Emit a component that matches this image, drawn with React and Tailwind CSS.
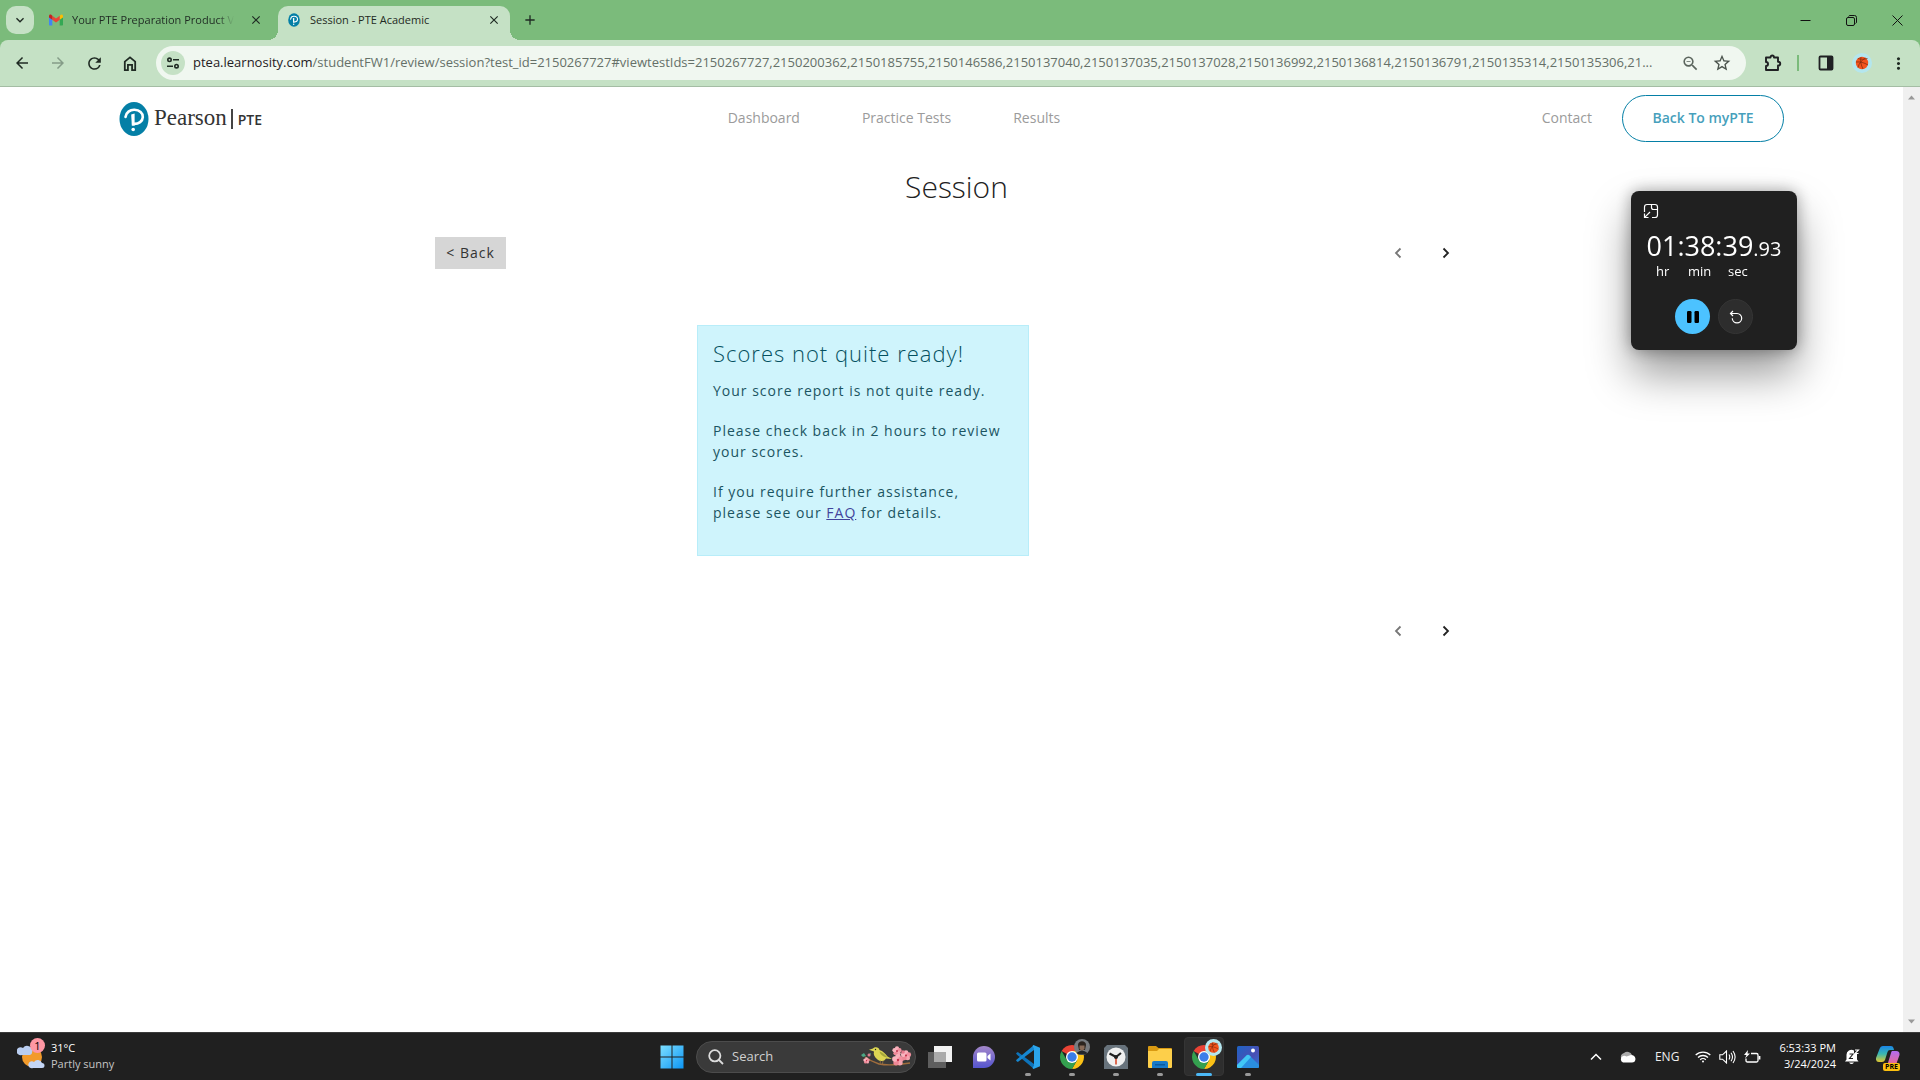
import React from "react";
import {
  MdArrowBack,
  MdArrowForward,
  MdRefresh,
  MdZoomOut,
  MdStarBorder,
  MdClose,
  MdAdd,
  MdKeyboardArrowDown,
  MdMoreVert,
} from "react-icons/md";

function PearsonMark({ className }) {
  return (
    <svg viewBox="0 0 30 34" className={className} aria-hidden="true">
      <ellipse cx="15" cy="17" rx="14.500" ry="17" fill="#047fa6" />
      <path d="M6.500 15C7 10.500 11 7.600 15.500 7.800c5 .2 8.500 3.200 8.300 7.300-.2 4.200-4 6.900-8.800 6.800" fill="none" stroke="#fff" strokeWidth="2.600" strokeLinecap="round" />
      <path d="M12.200 12.500l3.400-1v12.300h-2.800z" fill="#fff" />
      <circle cx="14.200" cy="27.500" r="1.800" fill="#fff" />
    </svg>
  );
}

function GmailIcon() {
  return (
    <svg viewBox="0 0 16 16" className="size-4 shrink-0" aria-hidden="true">
      <path d="M1 4v8.500c0 .6.400 1 1 1h2.300V7.500z" fill="#4285f4" />
      <path d="M15 4v8.500c0 .6-.4 1-1 1h-2.300V7.500z" fill="#34a853" />
      <path d="M11.700 3.800v4L15 5.400V4c0-1.500-1.500-2-2.500-1z" fill="#fbbc04" />
      <path d="M4.300 7.800v-4L8 6.600l3.700-2.800v4L8 10.600z" fill="#ea4335" />
      <path d="M1 4v1.400l3.300 2.400v-4L3.500 3C2.500 2 1 2.600 1 4z" fill="#c5221f" />
    </svg>
  );
}

function TuneIcon() {
  return (
    <svg viewBox="0 0 14 14" className="size-3.5" fill="none" stroke="#1f2a23" strokeWidth="1.600" aria-hidden="true">
      <circle cx="3.500" cy="3.800" r="1.700" />
      <path d="M7 3.800h6M1 10.200h6" />
      <circle cx="10.500" cy="10.200" r="1.700" />
    </svg>
  );
}

function SidePanelIcon() {
  return (
    <svg viewBox="0 0 16 16" className="size-4" aria-hidden="true">
      <rect x="1.500" y="1.500" width="13" height="13" rx="1" fill="none" stroke="#1f2023" strokeWidth="1.800" />
      <path d="M9 1.500h5.500v13H9z" fill="#1f2023" />
    </svg>
  );
}

function Basketball({ className }) {
  return (
    <svg viewBox="0 0 20 20" className={className} aria-hidden="true">
      <circle cx="10" cy="10" r="10" fill="#b4e6ee" />
      <circle cx="10" cy="10" r="6.200" fill="#f4541d" />
      <path d="M4 9c4-.5 8 .5 12 3M9 4c-1 4 0 8 2 12M13.500 5C10 7 7 10 6 14.500M6 5.500c3 1 6 1 9.500 0" fill="none" stroke="#7a2a10" strokeWidth=".7" />
    </svg>
  );
}

function ChromeLogo() {
  return (
    <svg viewBox="0 0 24 24" className="size-6" aria-hidden="true">
      <path d="M12 12L1.610 6A12 12 0 0 1 22.390 6z" fill="#ea4335" />
      <path d="M22.390 6A12 12 0 0 1 12 24L17.200 15 12 6z" fill="#fbc116" />
      <path d="M1.610 6A12 12 0 0 0 12 24l5.200-9L12 12l-5.200 3z" fill="#34a04f" />
      <circle cx="12" cy="12" r="6" fill="#fff" />
      <circle cx="12" cy="12" r="4.700" fill="#3b7de9" />
    </svg>
  );
}

function CaptionButton({ label, children }) {
  return (
    <button type="button" aria-label={label} className="grid h-10 w-[46px] place-items-center">
      <svg viewBox="0 0 11 11" className="size-[11px]" fill="none" stroke="#111" strokeWidth="1" aria-hidden="true">
        {children}
      </svg>
    </button>
  );
}

function TabStrip() {
  return (
    <div className="flex h-10 bg-[#7bbb7b] text-[11px] text-[#1f2a23]">
      <button type="button" aria-label="Search tabs" className="mt-1.5 ml-1.5 grid size-7 place-items-center rounded-[10px] bg-[#c5e1c5]">
        <MdKeyboardArrowDown className="size-4" />
      </button>
      <div className="ml-2 flex w-[236px] items-center pr-[15px] pl-1.5">
        <GmailIcon />
        <span className="ml-2 whitespace-nowrap [mask-image:linear-gradient(to_right,black_90%,transparent)]">
          Your PTE Preparation Product V
        </span>
        <button type="button" aria-label="Close tab" className="ml-auto">
          <MdClose className="size-3.5" />
        </button>
      </div>
      <div className="relative mt-1.5 flex w-[232px] items-center rounded-t-[10px] bg-[#c5e1c5] pr-[9px] pb-1.5 pl-2">
        <span className="absolute bottom-0 -left-2.5 size-2.5 bg-[radial-gradient(circle_at_0_0,#7bbb7b_10px,#c5e1c5_10px)]" />
        <span className="absolute -right-2.5 bottom-0 size-2.5 bg-[radial-gradient(circle_at_100%_0,#7bbb7b_10px,#c5e1c5_10px)]" />
        <span className="grid size-4 place-items-center">
          <PearsonMark className="h-3.5 w-3" />
        </span>
        <span className="ml-2 whitespace-nowrap">Session - PTE Academic</span>
        <button type="button" aria-label="Close tab" className="ml-auto">
          <MdClose className="size-3.5" />
        </button>
      </div>
      <button type="button" aria-label="New tab" className="ml-2.5 grid h-10 w-5 place-items-center">
        <MdAdd className="size-4" />
      </button>
      <div className="ml-auto flex">
        <CaptionButton label="Minimize">
          <path d="M.5 5.500h10" />
        </CaptionButton>
        <CaptionButton label="Restore">
          <rect x=".5" y="2.500" width="8" height="8" rx="1.500" />
          <path d="M2.500 1.500Q3 .5 4 .5h4.500q2 0 2 2V7q0 1-1 1.500" />
        </CaptionButton>
        <CaptionButton label="Close">
          <path d="M.5.500l10 10M10.500.500l-10 10" />
        </CaptionButton>
      </div>
    </div>
  );
}

const url =
  "/studentFW1/review/session?test_id=2150267727#viewtestIds=2150267727,2150200362,2150185755,2150146586,2150137040,2150137035,2150137028,2150136992,2150136814,2150136791,2150135314,2150135306,21...";

function Toolbar() {
  return (
    <div className="bg-[#7bbb7b]">
      <div className="flex h-[47px] items-center rounded-t-lg border-b border-[#a4bda4] bg-[#c5e1c5] pl-1 text-[#1f2a23]">
        <button type="button" aria-label="Back" className="grid w-9 place-items-center"><MdArrowBack className="size-[18px]" /></button>
        <button type="button" aria-label="Forward" disabled className="grid w-9 place-items-center text-[#859c88]"><MdArrowForward className="size-[18px]" /></button>
        <button type="button" aria-label="Reload" className="grid w-9 place-items-center"><MdRefresh className="size-[19px]" /></button>
        <button type="button" aria-label="Home" className="grid w-9 place-items-center">
          <svg viewBox="0 0 16 18" className="h-[17px] w-4" fill="none" stroke="currentColor" strokeWidth="1.900" aria-hidden="true">
            <path d="M2.500 7L8 2.500 13.500 7v9h-3.300v-5.500H5.800V16H2.500z" />
          </svg>
        </button>
        <div className="ml-2 flex h-[34px] min-w-0 flex-1 items-center rounded-full bg-[#f0f7f0] pr-3 pl-[5px]">
          <button type="button" aria-label="Site information" className="grid size-6 shrink-0 place-items-center rounded-full bg-[#c5e1c5]">
            <TuneIcon />
          </button>
          <span className="ml-2 min-w-0 flex-1 truncate text-[13px] text-[#657068]">
            <span className="text-[#1f2023]">ptea.learnosity.com</span>
            {url}
          </span>
          <button type="button" aria-label="Zoom" className="ml-1 grid size-6 shrink-0 place-items-center text-[#5b655d]"><MdZoomOut className="size-[19px]" /></button>
          <button type="button" aria-label="Bookmark this tab" className="ml-2 grid size-6 shrink-0 place-items-center text-[#4a534c]"><MdStarBorder className="size-5" /></button>
        </div>
        <button type="button" aria-label="Extensions" className="ml-[15px] grid w-6 place-items-center">
          <svg viewBox="0 0 18 18" className="size-[18px]" fill="none" stroke="#1f2023" strokeWidth="1.900" strokeLinejoin="round" aria-hidden="true">
            <path d="M2 3.500h4.500C6.500.8 10 .8 10 3.500h4v4.300c3 0 3 3.700 0 3.700V16H2v-4c2.700 0 2.700-4 0-4z" />
          </svg>
        </button>
        <span className="mr-[11px] ml-3 h-4 w-0.5 bg-[#7bbb7b]" />
        <button type="button" aria-label="Side panel" className="grid w-8 place-items-center"><SidePanelIcon /></button>
        <button type="button" aria-label="Profile" className="ml-0.5 grid w-9 place-items-center"><Basketball className="size-5" /></button>
        <button type="button" aria-label="Menu" className="mr-1 grid w-9 place-items-center"><MdMoreVert className="size-[19px]" /></button>
      </div>
    </div>
  );
}

function SiteHeader() {
  return (
    <header className="flex items-center justify-between px-[6.25%] pt-2 text-[14px] text-[#9b9b9b]">
      <a href="#home" className="flex h-[47px] items-center text-[#333]" aria-label="Pearson PTE">
        <PearsonMark className="h-[34px] w-[30px]" />
        <span className="ml-[5px] font-['Liberation_Serif',serif] text-[23px]">Pearson</span>
        <span className="ml-1 h-5 w-0.5 bg-[#444]" />
        <span className="ml-[5px] pt-0.5 text-[14px] font-semibold">PTE</span>
      </a>
      <nav className="flex gap-[62px] pr-4 pb-0.5 font-medium">
        <a href="#dashboard">Dashboard</a>
        <a href="#tests">Practice Tests</a>
        <a href="#results">Results</a>
      </nav>
      <div className="flex items-center gap-[30px]">
        <a href="#contact" className="pb-0.5 font-medium">Contact</a>
        <a href="#mypte" className="grid h-[47px] w-[162px] place-items-center rounded-full border border-[#047fa6] pb-0.5 font-semibold text-[#479fbc]">
          Back To myPTE
        </a>
      </div>
    </header>
  );
}

function Pager() {
  return (
    <div className="flex">
      <button type="button" aria-label="Previous" disabled className="grid h-8 w-12 place-items-center text-[#777]">
        <svg viewBox="0 0 8 12" className="h-3 w-2" fill="none" stroke="currentColor" strokeWidth="1.800" aria-hidden="true"><path d="M6.500 1.500L2 6l4.500 4.500" /></svg>
      </button>
      <button type="button" aria-label="Next" className="grid h-8 w-12 place-items-center text-[#222]">
        <svg viewBox="0 0 8 12" className="h-3 w-2" fill="none" stroke="currentColor" strokeWidth="1.800" aria-hidden="true"><path d="M1.500 1.500L6 6l-4.500 4.500" /></svg>
      </button>
    </div>
  );
}

function SessionPage() {
  return (
    <main className="mx-auto w-full max-w-[1037px] pt-[25px] pl-0.5">
      <h1 className="pl-2 text-center text-[30px] leading-10 font-light text-[#222]">Session</h1>
      <div className="mt-[30px] flex items-center justify-between">
        <button type="button" className="h-8 w-[71px] bg-[#d6d6d6] pb-0.5 text-[14px] tracking-[1px] text-[#333]">&lt; Back</button>
        <Pager />
      </div>
      <section className="mt-14 ml-[262px] w-[332px] border border-[#b8edf9] bg-[#cff4fc] pt-[11px] pr-5 pb-[13px] pl-[15px] text-[14px] leading-[21px] tracking-[1px] text-[#1b5562]">
        <h2 className="text-[22px] leading-8 font-light text-[#055160]">Scores not quite ready!</h2>
        <p className="mt-[11px] mb-[19px]">Your score report is not quite ready.</p>
        <p className="mb-[19px]">Please check back in 2 hours to review your scores.</p>
        <p className="mb-[19px]">
          If you require further assistance, please see our{" "}
          <a href="#faq" className="text-[#42439b] underline">FAQ</a> for details.
        </p>
      </section>
      <div className="mt-[59px] flex justify-end">
        <Pager />
      </div>
    </main>
  );
}

function Stopwatch() {
  return (
    <aside className="fixed top-[191px] right-[123px] h-[159px] w-[166px] rounded-lg bg-[#202020] text-white shadow-[0_24px_44px_rgba(0,0,0,0.4),0_0_16px_rgba(0,0,0,0.35)]">
      <button type="button" aria-label="Back to full view" className="mt-3 ml-3 block">
        <svg viewBox="0 0 16 16" className="size-4" fill="none" stroke="#fff" strokeWidth="1.200" aria-hidden="true">
          <path d="M1.500 9V4q0-2.500 2.500-2.500h8q2.500 0 2.500 2.500v8q0 2.500-2.500 2.500H9M8.500 1.500v3q0 2 2 2h4M7 9l-5.300 5.300M1.500 10.500v4h4" />
        </svg>
      </button>
      <div className="mt-3 flex h-8 items-baseline justify-center leading-[30px]">
        <span className="text-[27px]">01:38:39</span>
        <span className="text-[20px]">.93</span>
      </div>
      <div className="flex h-4 gap-4 pl-[25px] text-[13px] leading-4">
        <span className="w-4">hr</span>
        <span className="w-6">min</span>
        <span>sec</span>
      </div>
      <div className="mt-5 flex justify-center gap-2">
        <button type="button" aria-label="Pause" className="grid size-[35px] place-items-center rounded-full bg-[#4cc2ff]">
          <svg viewBox="0 0 12 12" className="size-3" aria-hidden="true"><rect width="4.500" height="12" rx="1.200" fill="#000" /><rect x="7.500" width="4.500" height="12" rx="1.200" fill="#000" /></svg>
        </button>
        <button type="button" aria-label="Reset" className="grid size-[35px] place-items-center rounded-full border border-[#353535] bg-[#2d2d2d]">
          <svg viewBox="0 0 14 14" className="size-3.5" fill="none" stroke="#fff" strokeWidth="1.200" aria-hidden="true">
            <path d="M4 1L1.500 3.500 4 6M1.500 3.500H8a4.700 4.700 0 1 1-4.700 4.700" />
          </svg>
        </button>
      </div>
    </aside>
  );
}

function TaskIcon({ label, state, badge, children }) {
  return (
    <button type="button" aria-label={label} className="relative grid h-[47px] w-11 place-items-center">
      {state === "active" && <span className="absolute inset-x-0.5 inset-y-1 rounded border border-[#353535] bg-[#2e2e2e]" />}
      <span className="relative">{children}</span>
      {badge}
      {state === "open" && <span className="absolute bottom-1 left-1/2 h-[3px] w-1.5 -translate-x-1/2 rounded-full bg-[#999]" />}
      {state === "active" && <span className="absolute bottom-1 left-1/2 h-[3px] w-4 -translate-x-1/2 rounded-full bg-[#4cb8f5]" />}
    </button>
  );
}

function Blossom({ x, y, r }) {
  return (
    <g transform={`translate(${x} ${y}) scale(${r})`}>
      <circle cx="0" cy="-.6" r=".5" fill="#f9b0bb" />
      <circle cx=".57" cy="-.18" r=".5" fill="#f2909f" />
      <circle cx=".35" cy=".5" r=".5" fill="#f7a5b1" />
      <circle cx="-.35" cy=".5" r=".5" fill="#ee8796" />
      <circle cx="-.57" cy="-.18" r=".5" fill="#f9b4be" />
      <circle r=".22" fill="#c8324e" />
    </g>
  );
}

function BirdDecoration() {
  return (
    <svg viewBox="0 0 52 22" className="h-[22px] w-[52px]" aria-hidden="true">
      <path d="M5 11c4 3 8 5 14 7 8 1.500 18 1 31-1" fill="none" stroke="#a06d3c" strokeWidth="1.400" />
      <path d="M1 9l3-2 2 3-3 1zM8 8l3-1-1 3z" fill="#4aa884" />
      <Blossom x={6.500} y={14.500} r={3} />
      <circle cx="9" cy="9" r="1.500" fill="#e07a8d" />
      <path d="M9 3.800l4-1.300C14.500.5 19 .5 19.500 4c3.500 1 6 4 8 6.500l4.500 2.500-6-.5c-1.500 3-5.500 3.500-8.500 1-2.800-2.300-4.500-5-3.500-8z" fill="#dcd653" />
      <path d="M19.500 5.500c3.500 1 6 3.500 8 6-3.500-.5-7-2-8-6z" fill="#a5a83a" />
      <circle cx="15.500" cy="3.500" r=".7" fill="#222" />
      <path d="M20.500 14.500l-.5 3.500M23 14.500l-.5 3.500" stroke="#9b7545" strokeWidth=".8" />
      <Blossom x={37} y={5} r={4.300} />
      <Blossom x={38} y={14} r={5.500} />
      <Blossom x={46} y={9.500} r={4.800} />
      <circle cx="43" cy="6" r="1.800" fill="#e77a8d" />
    </svg>
  );
}

function Apps() {
  return (
    <>
      <TaskIcon label="Task view">
        <svg viewBox="0 0 24 22" className="h-[22px] w-6" aria-hidden="true">
          <path d="M6 0h18v16H6z" fill="#f2f2f2" /><path d="M0 6h18v16H0z" fill="#6a6a6a" fillOpacity=".85" /><path d="M6 6h12v10H6z" fill="#aaa" />
        </svg>
      </TaskIcon>
      <TaskIcon label="Chat">
        <svg viewBox="0 0 24 24" className="size-6" aria-hidden="true">
          <defs><linearGradient id="chat" x1="0" y1="0" x2="0" y2="1"><stop stopColor="#a487c9" /><stop offset="1" stopColor="#5454cf" /></linearGradient></defs>
          <path d="M12 1a11 11 0 1 1 0 22H1V12A11 11 0 0 1 12 1z" fill="url(#chat)" />
          <rect x="5" y="7.500" width="9.500" height="9" rx="1.500" fill="#fff" /><path d="M15.500 11l3-2.500v7l-3-2.500z" fill="#fff" />
        </svg>
      </TaskIcon>
      <TaskIcon label="Visual Studio Code" state="open">
        <svg viewBox="0 0 24 24" className="size-6" aria-hidden="true">
          <path d="M0 8.300L1.800 7 18 19v5L1 9.800z" fill="#0d73ba" />
          <path d="M0 15.700L1.800 17 18 5V0L1 14.200z" fill="#1688d2" />
          <path d="M17.500 0L24 2.800v18.400L17.500 24l-1-1L18 20.500v-17L16.500 1z" fill="#2ba5ec" />
        </svg>
      </TaskIcon>
      <TaskIcon
        label="Google Chrome"
        state="open"
        badge={
          <svg viewBox="0 0 16 16" className="absolute top-1.5 right-1 size-4" aria-hidden="true">
            <circle cx="8" cy="8" r="8" fill="#777b80" /><path d="M4 6c0-5 8-5 8 0l-1 5H5z" fill="#2c241f" /><path d="M5.500 6.500h5V10L8 12l-2.500-2z" fill="#896b58" /><path d="M2.500 14q5.500-5 11 0l-2 1.500h-7z" fill="#22252a" />
          </svg>
        }
      >
        <ChromeLogo />
      </TaskIcon>
      <TaskIcon label="Clock" state="open">
        <svg viewBox="0 0 24 24" className="size-6" aria-hidden="true">
          <path d="M3 0h18l3 3v21H0V3z" fill="#68737c" /><circle cx="12" cy="12" r="9.500" fill="#f0f0f0" />
          <path d="M5.500 8.500L12 12l5-4" fill="none" stroke="#222" strokeWidth="2.200" /><path d="M12 12v7.500" stroke="#d8492b" strokeWidth="1.600" /><circle cx="12" cy="12" r="2" fill="#222" />
        </svg>
      </TaskIcon>
      <TaskIcon label="File Explorer" state="open">
        <svg viewBox="0 0 24 22" className="h-[22px] w-6" aria-hidden="true">
          <path d="M0 1q0-1 1-1h7l2.500 2H23q1 0 1 1v5H0z" fill="#d99a12" /><path d="M0 5h9l2-2h12q1 0 1 1v17q0 1-1 1H1q-1 0-1-1z" fill="#fdcf4a" />
          <path d="M4 22v-5q0-2 2-2h12q2 0 2 2v5z" fill="#1679c9" /><path d="M7 18h10v1.500H7z" fill="#0a5ba0" />
        </svg>
      </TaskIcon>
      <TaskIcon label="Google Chrome, Session" state="active" badge={<Basketball className="absolute top-1.5 right-1 size-[17px]" />}>
        <ChromeLogo />
      </TaskIcon>
      <TaskIcon label="Photos" state="open">
        <svg viewBox="0 0 22 22" className="size-[22px]" aria-hidden="true">
          <defs><linearGradient id="photo" x1="0" y1="0" x2="1" y2="1"><stop stopColor="#1e63c4" /><stop offset=".6" stopColor="#4a4fb4" /><stop offset="1" stopColor="#2a7ad8" /></linearGradient></defs>
          <rect width="22" height="22" rx="1.500" fill="url(#photo)" /><path d="M0 19L9.500 9.500q1.500-1.500 3 0L22 19v1.500q0 1.500-1.500 1.500h-19Q0 22 0 20.500z" fill="#2a8fe0" /><path d="M0 19l9.500-9.500q1.500-1.500 3 0L14 11 4 22H1.500Q0 22 0 20.500z" fill="#41c7f5" /><circle cx="16" cy="4.500" r="2" fill="#fff" />
        </svg>
      </TaskIcon>
    </>
  );
}

function Taskbar() {
  return (
    <footer className="grid h-12 grid-cols-[1fr_auto_1fr] border-t border-[#3b3b3b] bg-[#202020] text-[11px] text-white">
      <button type="button" className="flex items-center gap-1 pb-0.5 pl-[17px] text-left leading-4">
        <span className="relative block size-7">
          <svg viewBox="0 0 28 28" className="size-7" aria-hidden="true">
            <circle cx="15" cy="15" r="10" fill="#f29a2a" />
            <path d="M5 13a4 4 0 1 1 1-7 5 5 0 0 1 9 2q1 4-2 5z" fill="#b9cdf0" /><path d="M16 26a3.500 3.500 0 1 1 1-6 4.500 4.500 0 0 1 8 1 2.500 2.500 0 0 1 0 5z" fill="#c3d5f5" />
          </svg>
          <span className="absolute -top-1 right-0 grid size-[15px] place-items-center rounded-full bg-[#ff97a3] text-[11px] text-black">1</span>
        </span>
        <span className="ml-0.5">
          <span className="block">31°C</span>
          <span className="block text-[#c5c5c5]">Partly sunny</span>
        </span>
      </button>
      <div className="flex items-center">
        <TaskIcon label="Start">
          <svg viewBox="0 0 24 24" className="size-6" aria-hidden="true">
            <defs><linearGradient id="start" gradientUnits="userSpaceOnUse" x1="0" y1="0" x2="24" y2="24"><stop stopColor="#7fe0ff" /><stop offset="1" stopColor="#0a94f5" /></linearGradient></defs>
            <path d="M.5.500h11v11H.500zM12.500.500h11v11h-11zM.5 12.500h11v11H.500zM12.500 12.500h11v11h-11z" fill="url(#start)" />
          </svg>
        </TaskIcon>
        <label className="mx-0.5 flex h-8 w-[220px] items-center rounded-full border border-[#4c4c4c] bg-[#3a3a3a] pr-[3px] pl-[11px]">
          <svg viewBox="0 0 16 16" className="size-4 shrink-0" fill="none" stroke="#ddd" strokeWidth="1.800" aria-hidden="true"><circle cx="6.800" cy="6.800" r="5.600" /><path d="M11 11l4 4" /></svg>
          <input type="text" aria-label="Search" placeholder="Search" className="ml-2 min-w-0 flex-1 bg-transparent text-[13px] outline-none placeholder:text-[#d0d0d0]" />
          <BirdDecoration />
        </label>
        <Apps />
      </div>
      <div className="flex items-center justify-end pr-5">
        <button type="button" aria-label="Show hidden icons" className="grid w-8 place-items-center">
          <svg viewBox="0 0 12 8" className="h-2 w-3" fill="none" stroke="#fff" strokeWidth="1.500" aria-hidden="true"><path d="M1 6.500l5-5 5 5" /></svg>
        </button>
        <button type="button" aria-label="OneDrive" className="grid w-8 place-items-center">
          <svg viewBox="0 0 17 12" className="h-3 w-[17px]" aria-hidden="true">
            <path d="M2 7a4 4 0 0 1 3-5 5 5 0 0 1 8 2l-2 4z" fill="#aaa" /><path d="M4 11.500a3.500 3.500 0 0 1 0-6.500q2-.5 3.500.5L12 4q4 0 4.500 4-.3 3.500-3.500 3.500z" fill="#fff" />
          </svg>
        </button>
        <button type="button" aria-label="Language" className="ml-[11px] text-[12px] text-[#eee]">ENG</button>
        <button type="button" aria-label="Network, volume and battery" className="ml-4 flex items-center gap-2">
          <svg viewBox="0 0 16 13" className="h-[13px] w-4" fill="none" stroke="#fff" strokeWidth="1.300" aria-hidden="true"><path d="M.7 5a10.500 10.500 0 0 1 14.600 0M3 7.500a7.200 7.200 0 0 1 10 0M5.200 9.800a4 4 0 0 1 5.600 0" /><circle cx="8" cy="11.500" r="1" fill="#fff" stroke="none" /></svg>
          <svg viewBox="0 0 17 14" className="h-3.5 w-[17px]" fill="none" stroke="#fff" strokeWidth="1.100" aria-hidden="true"><path d="M.8 4.800h2.700L7.500 1v12L3.500 9.200H.8zM10 4.500q1.500 2.500 0 5M12 2.700q3 4.300 0 8.600M14 1q4.200 6 0 12" /></svg>
          <svg viewBox="0 0 17 14" className="h-3.5 w-[17px]" fill="none" stroke="#fff" strokeWidth="1.300" aria-hidden="true"><path d="M7 3.500h5.500Q14 3.500 14 5v5.500q0 1.500-1.500 1.500h-9Q2 12 2 10.500V8.500" /><path d="M15.500 6v3.500" strokeWidth="1.800" /><path d="M4 0L0 5h2.500L1 8.500 6 3.500H3.500z" fill="#fff" stroke="none" /></svg>
        </button>
        <button type="button" className="ml-[18px] pb-0.5 text-right leading-4">
          <span className="block">6:53:33 PM</span>
          <span className="block">3/24/2024</span>
        </button>
        <button type="button" aria-label="Notifications" className="ml-2">
          <svg viewBox="0 0 16 16" className="size-4" aria-hidden="true"><path d="M1 12.500l1.500-2V6a5 5 0 0 1 7.500-4.500L10 5h3v5.500l1.500 2zM5 13.500h5q-2.500 3-5 0z" fill="#fff" /><path d="M5.500 5h3.500l-3.500 4.500H9" fill="none" stroke="#202020" strokeWidth="1.100" /><path d="M11 1h3.500L11 4.500h3.500" fill="none" stroke="#fff" strokeWidth="1.100" /></svg>
        </button>
        <button type="button" aria-label="Copilot preview" className="relative ml-4 h-6">
          <svg viewBox="0 0 24 22" className="h-[22px] w-6" aria-hidden="true">
            <defs><linearGradient id="copa" x1="0" y1="0" x2="0" y2="1"><stop stopColor="#1a86e8" /><stop offset=".5" stopColor="#3ab7b0" /><stop offset="1" stopColor="#e3c82d" /></linearGradient><linearGradient id="copb" x1="0" y1="0" x2="0" y2="1"><stop stopColor="#b26bf0" /><stop offset="1" stopColor="#f06a86" /></linearGradient></defs>
            <path d="M7 0h8q2 0 2.500 2l.5 2h-4q-2 0-2.500 2L9 14q-.8 2-3 2H3q-3.500 0-3-4L3.500 3Q4.500 0 7 0z" fill="url(#copa)" /><path d="M16 5h4q4 0 3.500 4L21 16q-.8 4-4 4H9q2 0 2.800-2.500L15 7q.3-1.500 1-2z" fill="url(#copb)" />
          </svg>
          <span className="absolute right-0 -bottom-0.5 rounded-xs bg-[#fdc00f] px-0.5 text-[7px] leading-[8px] font-bold text-black">PRE</span>
        </button>
      </div>
    </footer>
  );
}

function Scrollbar() {
  return (
    <div className="flex w-[17px] shrink-0 flex-col justify-between bg-[#f0f0f0] py-1.5" aria-hidden="true">
      <svg viewBox="0 0 17 8" className="h-2"><path d="M5 6.500l3.500-4 3.500 4z" fill="#999" /></svg>
      <svg viewBox="0 0 17 8" className="h-2"><path d="M5 1.500l3.500 4 3.500-4z" fill="#999" /></svg>
    </div>
  );
}

export default function App() {
  return (
    <div className="flex min-h-screen flex-col bg-white font-['Open_Sans',sans-serif]">
      <TabStrip />
      <Toolbar />
      <div className="flex flex-1">
        <div className="min-w-0 flex-1">
          <SiteHeader />
          <SessionPage />
        </div>
        <Scrollbar />
      </div>
      <Taskbar />
      <Stopwatch />
    </div>
  );
}
